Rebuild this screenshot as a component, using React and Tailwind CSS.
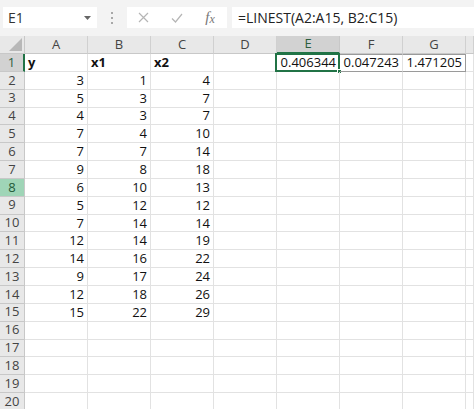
import React from "react";

const A = [3, 5, 4, 7, 7, 9, 6, 5, 7, 12, 14, 9, 12, 15];
const B = [1, 3, 3, 4, 7, 8, 10, 12, 14, 14, 16, 17, 18, 22];
const C = [4, 7, 7, 10, 14, 18, 13, 12, 14, 19, 22, 24, 26, 29];
const COLS = ["A", "B", "C", "D", "E", "F", "G", ""];

function cellContent(r, c) {
  if (r === 1) {
    if (c === 0) return { t: "y", b: true };
    if (c === 1) return { t: "x1", b: true };
    if (c === 2) return { t: "x2", b: true };
    if (c === 4) return { t: "0.406344" };
    if (c === 5) return { t: "0.047243" };
    if (c === 6) return { t: "1.471205" };
    return null;
  }
  if (r >= 2 && r <= 15) {
    const i = r - 2;
    if (c === 0) return { t: String(A[i]) };
    if (c === 1) return { t: String(B[i]) };
    if (c === 2) return { t: String(C[i]) };
  }
  return null;
}

export default function App() {
  const rows = Array.from({ length: 20 }, (_, i) => i + 1);
  return (
    <div
      className="w-[474px] h-[409px] overflow-hidden bg-white text-black"
      style={{ fontFamily: '"Open Sans", "Liberation Sans", sans-serif' }}
    >
      {/* formula bar */}
      <div className="h-[36px] bg-[#f3f3f3] flex items-start pt-[7px]">
        <div className="ml-[3px] w-[94px] h-[21px] bg-white flex items-center justify-between pl-[5px] pr-[6px] text-[14px] text-[#333]">
          <span>E1</span>
          <svg width="7" height="4" viewBox="0 0 7 4">
            <path d="M0 0 L7 0 L3.5 4 Z" fill="#666" />
          </svg>
        </div>
        <div className="w-[30px] h-[21px] flex flex-col items-center justify-center gap-[3px]">
          <span className="w-[2px] h-[2px] bg-[#a8a8a8]" />
          <span className="w-[2px] h-[2px] bg-[#a8a8a8]" />
          <span className="w-[2px] h-[2px] bg-[#a8a8a8]" />
        </div>
        <div className="w-[100px] h-[21px] bg-white flex items-center">
          <div className="w-[33px] flex justify-center">
            <svg width="11" height="11" viewBox="0 0 11 11">
              <path d="M1 1 L10 10 M10 1 L1 10" stroke="#b5b5b5" strokeWidth="1.2" />
            </svg>
          </div>
          <div className="w-[33px] flex justify-center">
            <svg width="12" height="10" viewBox="0 0 12 10">
              <path d="M1 5.5 L4.5 9 L11 1" stroke="#b5b5b5" strokeWidth="1.2" fill="none" />
            </svg>
          </div>
          <div
            className="w-[34px] flex justify-center text-[15px] italic text-[#777] leading-none"
            style={{ fontFamily: '"Liberation Serif", serif' }}
          >
            <span>f</span>
            <span className="text-[12px] mt-[3px]">x</span>
          </div>
        </div>
        <div className="ml-[5px] flex-1 h-[21px] bg-white flex items-center pl-[6px] text-[14px] text-[#222]">
          =LINEST(A2:A15, B2:C15)
        </div>
      </div>

      {/* grid */}
      <div className="grid grid-cols-[25px_repeat(7,63px)_1fr] grid-rows-[18px_repeat(20,17.85px)] text-[13px]">
        {/* corner */}
        <div className="bg-[#e8e8e8] border-r border-b border-[#c8c8c8] relative">
          <svg className="absolute right-[2px] bottom-[2px]" width="13" height="13" viewBox="0 0 13 13">
            <path d="M13 0 L13 13 L0 13 Z" fill="#b8b8b8" />
          </svg>
        </div>
        {COLS.map((c, i) => (
          <div
            key={c + i}
            className={
              i === 4
                ? "bg-[#d2d2d2] border-r border-[#c8c8c8] border-b-2 border-b-[#217346] flex items-center justify-center text-[#2c5e3f] text-[13px]"
                : "bg-[#e8e8e8] border-r border-b border-[#d0d0d0] border-b-[#c8c8c8] flex items-center justify-center text-[#444] text-[13px]"
            }
          >
            {c}
          </div>
        ))}
        {rows.map((r) => (
          <React.Fragment key={r}>
            <div
              className={
                r === 8
                  ? "bg-[#9fd5b7] border-r border-b border-[#c8c8c8] flex items-center justify-center text-[#1e5a38] text-[13px]"
                  : r === 1
                  ? "bg-[#d2d2d2] border-r-2 border-r-[#217346] border-b border-[#c8c8c8] flex items-center justify-center text-[#2c5e3f] text-[13px]"
                  : "bg-[#e8e8e8] border-r border-b border-[#c8c8c8] flex items-center justify-center text-[#444] text-[13px]"
              }
            >
              {r}
            </div>
            {COLS.map((_, c) => {
              const v = cellContent(r, c);
              const selected = r === 1 && c === 4;
              const spill = r === 1 && (c === 5 || c === 6);
              let cls = "relative flex items-center border-r border-b border-[#e2e2e2] ";
              if (spill) cls += "border-t border-t-[#9a9a9a] border-b-[#9a9a9a] ";
              if (spill && c === 6) cls += "border-r-[#9a9a9a] ";
              if (v && v.b) cls += "justify-start pl-[3px] font-bold ";
              else cls += "justify-end pr-[3px] ";
              return (
                <div key={c} className={cls}>
                  {v ? <span className="leading-none text-[#111]">{v.t}</span> : null}
                  {selected ? (
                    <>
                      <div className="absolute left-[-2px] top-[-1px] right-[-1px] bottom-[-1px] border-2 border-[#217346] pointer-events-none" />
                      <div className="absolute right-[-3px] bottom-[-3px] w-[5px] h-[5px] bg-[#217346] border border-white" />
                    </>
                  ) : null}
                </div>
              );
            })}
          </React.Fragment>
        ))}
      </div>
    </div>
  );
}
